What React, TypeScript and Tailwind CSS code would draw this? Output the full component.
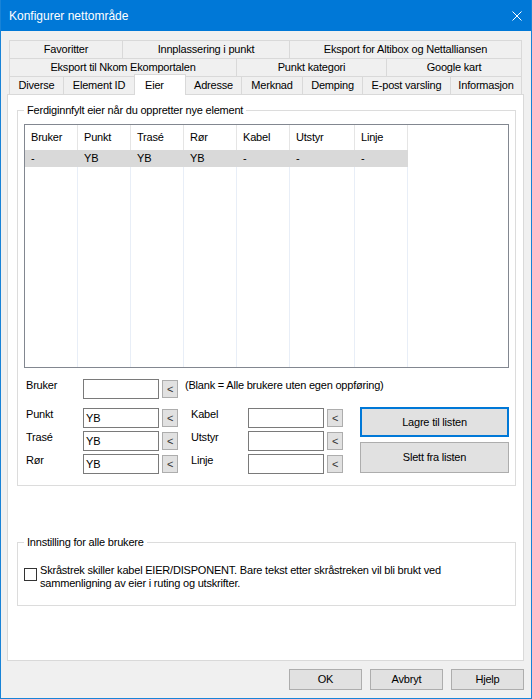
import React from 'react';
import clsx from 'clsx';

type Tab = { label: string; w: string; active?: boolean };

const TAB_ROWS: Tab[][] = [
    [
        { label: 'Favoritter', w: 'w-[113px]' },
        { label: 'Innplassering i punkt', w: 'w-[167px]' },
        { label: 'Eksport for Altibox og Nettalliansen', w: 'w-[233px]' },
    ],
    [
        { label: 'Eksport til Nkom Ekomportalen', w: 'w-[227px]' },
        { label: 'Punkt kategori', w: 'w-[150px]' },
        { label: 'Google kart', w: 'w-[136px]' },
    ],
    [
        { label: 'Diverse', w: 'w-[54px]' },
        { label: 'Element ID', w: 'w-[71px]' },
        { label: 'Eier', w: 'w-[52px]', active: true },
        { label: 'Adresse', w: 'w-[56px]' },
        { label: 'Merknad', w: 'w-[61px]' },
        { label: 'Demping', w: 'w-[60px]' },
        { label: 'E-post varsling', w: 'w-[88px]' },
        { label: 'Informasjon', w: 'w-[72px]' },
    ],
];

const COLUMNS = [
    { head: 'Bruker', value: '-', w: 'w-[53px]' },
    { head: 'Punkt', value: 'YB', w: 'w-[53px]' },
    { head: 'Trasé', value: 'YB', w: 'w-[53px]' },
    { head: 'Rør', value: 'YB', w: 'w-[53px]' },
    { head: 'Kabel', value: '-', w: 'w-[53px]' },
    { head: 'Utstyr', value: '-', w: 'w-[65px]' },
    { head: 'Linje', value: '-', w: 'w-[53px]' },
];

function TabRow({ tabs, last }: { tabs: Tab[]; last?: boolean }) {
    return (
        <div className={clsx('flex h-[18px]', last && 'items-start')}>
            {tabs.map((t, i) => (
                <div
                    key={t.label}
                    className={clsx(
                        t.w,
                        'flex border-t border-l border-[#d9d9d9] whitespace-nowrap',
                        i === tabs.length - 1 && 'border-r',
                        t.active
                            ? 'relative z-10 -mt-[2px] h-[21px] bg-white border-r items-start justify-start pl-[10px] pt-[2px]'
                            : 'h-[18px] items-center justify-center bg-[#f0f0f0]',
                        i > 0 && tabs[i - 1].active && '-ml-px'
                    )}
                >
                    {t.label}
                </div>
            ))}
        </div>
    );
}

function TextBox({ value }: { value?: string }) {
    return (
        <div className="w-[76px] h-[20px] bg-white border border-[#7a7a7a] pl-[2px] flex items-center">
            {value}
        </div>
    );
}

function PickButton() {
    return (
        <div className="ml-[3px] mt-[1px] w-[16px] h-[18px] bg-[#e1e1e1] border border-[#adadad] flex items-center justify-center text-[#333]">
            &lt;
        </div>
    );
}

function FieldRow({ label, value }: { label: string; value?: string }) {
    return (
        <div className="flex items-start h-[20px]">
            <span className="w-[57px] leading-[13px]">{label}</span>
            <TextBox value={value} />
            <PickButton />
        </div>
    );
}

export default function App() {
    return (
        <div className="w-[532px] h-[699px] flex flex-col bg-[#f0f0f0] border-x border-b border-[#1883d7] font-['Liberation_Sans',Arial,sans-serif] text-[11px] tracking-[-0.2px] text-black">
            {/* Title bar */}
            <div className="h-[31px] shrink-0 bg-[#0078d7] flex items-center justify-between pl-[8px] pr-[9px] text-white text-[12px] tracking-normal">
                <span>Konfigurer nettområde</span>
                <svg width="10" height="10" viewBox="0 0 10 10" className="block">
                    <path d="M0.5 0.5 L9.5 9.5 M9.5 0.5 L0.5 9.5" stroke="white" strokeWidth="1" />
                </svg>
            </div>

            {/* Tabs + page */}
            <div className="pl-[6px] pr-[7px] pt-[9px]">
                <div className="ml-[2px]">
                    {TAB_ROWS.map((row, i) => (
                        <TabRow key={i} tabs={row} last={i === TAB_ROWS.length - 1} />
                    ))}
                </div>

                <div className="h-[567px] bg-white border border-[#d9d9d9] flex flex-col">
                    <fieldset className="mt-[8px] ml-[9px] mr-[7px] h-[383px] border border-[#dcdcdc] min-w-0">
                        <legend className="ml-[6px] px-[3px] leading-[14px]">
                            Ferdiginnfylt eier når du oppretter nye element
                        </legend>

                        {/* List view */}
                        <div className="mx-[6px] mt-[7px] h-[244px] border border-[#828790] flex flex-col overflow-hidden">
                            <div className="flex h-[25px] shrink-0">
                                {COLUMNS.map((c) => (
                                    <div key={c.head} className={clsx(c.w, 'border-r border-[#e5e5e5] pl-[6px] flex items-center')}>
                                        {c.head}
                                    </div>
                                ))}
                            </div>
                            <div className="flex h-[17px] shrink-0 bg-[#d9d9d9] self-start">
                                {COLUMNS.map((c) => (
                                    <div key={c.head} className={clsx(c.w, 'pl-[6px] flex items-center')}>
                                        {c.value}
                                    </div>
                                ))}
                            </div>
                            <div className="flex flex-1">
                                {COLUMNS.map((c) => (
                                    <div key={c.head} className={clsx(c.w, 'border-r border-[#e8eef7]')} />
                                ))}
                            </div>
                        </div>

                        {/* Form */}
                        <div className="mt-[11px] pl-[8px] flex flex-col">
                            <div className="flex items-start h-[20px]">
                                <span className="w-[57px] leading-[13px]">Bruker</span>
                                <TextBox />
                                <PickButton />
                                <span className="ml-[7px] leading-[13px] whitespace-nowrap">
                                    (Blank = Alle brukere uten egen oppføring)
                                </span>
                            </div>

                            <div className="mt-[9px] flex items-start">
                                <div className="flex flex-col gap-[3px]">
                                    <FieldRow label="Punkt" value="YB" />
                                    <FieldRow label="Trasé" value="YB" />
                                    <FieldRow label="Rør" value="YB" />
                                </div>
                                <div className="ml-[13px] flex flex-col gap-[3px]">
                                    <FieldRow label="Kabel" />
                                    <FieldRow label="Utstyr" />
                                    <FieldRow label="Linje" />
                                </div>
                                <div className="ml-[17px] -mt-[1px] flex flex-col gap-[5px]">
                                    <div className="w-[149px] h-[30px] bg-[#e1e1e1] border-2 border-[#0078d7] flex items-center justify-center">
                                        Lagre til listen
                                    </div>
                                    <div className="w-[149px] h-[31px] bg-[#e1e1e1] border border-[#adadad] flex items-center justify-center">
                                        Slett fra listen
                                    </div>
                                </div>
                            </div>
                        </div>
                    </fieldset>

                    <fieldset className="mt-[49px] ml-[9px] mr-[7px] h-[71px] border border-[#dcdcdc] min-w-0">
                        <legend className="ml-[6px] px-[3px] leading-[14px]">Innstilling for alle brukere</legend>
                        <div className="mt-[15px] pl-[6px] flex items-start">
                            <div className="mt-[4px] w-[13px] h-[13px] shrink-0 bg-white border border-[#333]" />
                            <p className="ml-[3px] leading-[13px] whitespace-nowrap">
                                Skråstrek skiller kabel EIER/DISPONENT. Bare tekst etter skråstreken vil bli brukt ved
                                <br />
                                sammenligning av eier i ruting og utskrifter.
                            </p>
                        </div>
                    </fieldset>
                </div>
            </div>

            {/* Dialog buttons */}
            <div className="mt-[8px] pr-[7px] flex justify-end gap-[8px]">
                {['OK', 'Avbryt', 'Hjelp'].map((b) => (
                    <div key={b} className="w-[73px] h-[21px] bg-[#e1e1e1] border border-[#adadad] flex items-center justify-center">
                        {b}
                    </div>
                ))}
            </div>
        </div>
    );
}
